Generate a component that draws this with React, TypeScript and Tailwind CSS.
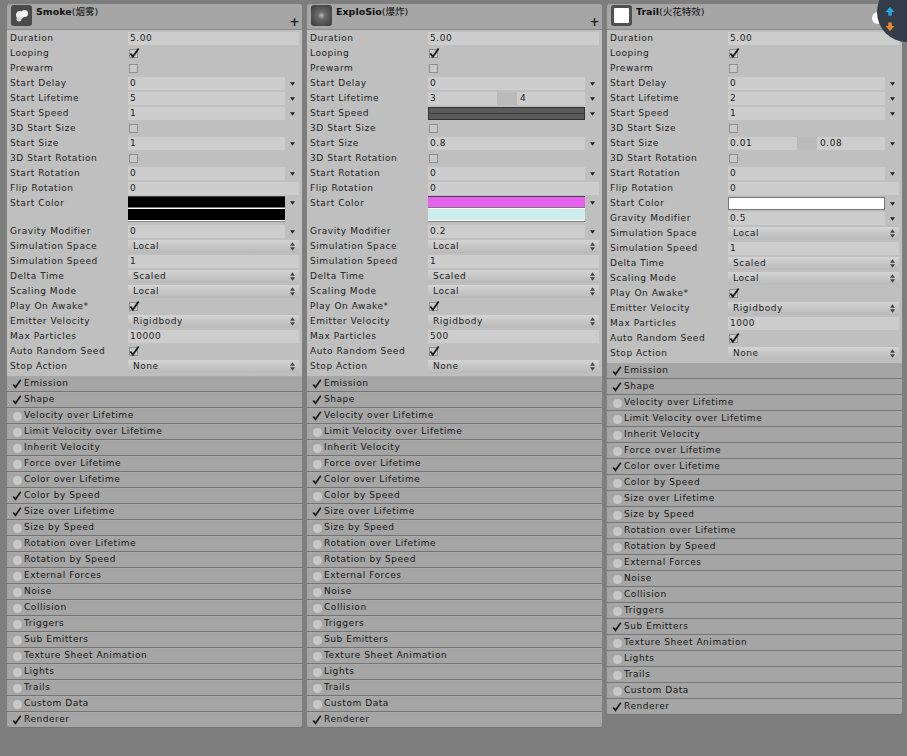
import type { ReactNode } from 'react';

type Row =
  | { kind: 'text' | 'drop' | 'enum'; label: string; value: string }
  | { kind: 'check'; label: string; on: boolean }
  | { kind: 'range'; label: string; a: string; b: string }
  | { kind: 'curve'; label: string }
  | { kind: 'color'; label: string; top: string; bottom: string }
  | { kind: 'white'; label: string };

const moduleNames = [
  'Emission',
  'Shape',
  'Velocity over Lifetime',
  'Limit Velocity over Lifetime',
  'Inherit Velocity',
  'Force over Lifetime',
  'Color over Lifetime',
  'Color by Speed',
  'Size over Lifetime',
  'Size by Speed',
  'Rotation over Lifetime',
  'Rotation by Speed',
  'External Forces',
  'Noise',
  'Collision',
  'Triggers',
  'Sub Emitters',
  'Texture Sheet Animation',
  'Lights',
  'Trails',
  'Custom Data',
  'Renderer',
];

const text = (label: string, value: string): Row => ({ kind: 'text', label, value });
const drop = (label: string, value: string): Row => ({ kind: 'drop', label, value });
const pick = (label: string, value: string): Row => ({ kind: 'enum', label, value });
const check = (label: string, on = false): Row => ({ kind: 'check', label, on });

const tail = (maxParticles: string): Row[] => [
  pick('Simulation Space', 'Local'),
  text('Simulation Speed', '1'),
  pick('Delta Time', 'Scaled'),
  pick('Scaling Mode', 'Local'),
  check('Play On Awake*', true),
  pick('Emitter Velocity', 'Rigidbody'),
  text('Max Particles', maxParticles),
  check('Auto Random Seed', true),
  pick('Stop Action', 'None'),
];

const systems: { name: string; note: string; thumb: 'smoke' | 'glow' | 'white'; rows: Row[]; enabled: string[] }[] = [
  {
    name: 'Smoke',
    note: '(烟雾)',
    thumb: 'smoke',
    rows: [
      text('Duration', '5.00'),
      check('Looping', true),
      check('Prewarm'),
      drop('Start Delay', '0'),
      drop('Start Lifetime', '5'),
      drop('Start Speed', '1'),
      check('3D Start Size'),
      drop('Start Size', '1'),
      check('3D Start Rotation'),
      drop('Start Rotation', '0'),
      text('Flip Rotation', '0'),
      { kind: 'color', label: 'Start Color', top: 'bg-black', bottom: 'bg-black' },
      drop('Gravity Modifier', '0'),
      ...tail('10000'),
    ],
    enabled: ['Emission', 'Shape', 'Color by Speed', 'Size over Lifetime', 'Renderer'],
  },
  {
    name: 'ExploSio',
    note: '(爆炸)',
    thumb: 'glow',
    rows: [
      text('Duration', '5.00'),
      check('Looping', true),
      check('Prewarm'),
      drop('Start Delay', '0'),
      { kind: 'range', label: 'Start Lifetime', a: '3', b: '4' },
      { kind: 'curve', label: 'Start Speed' },
      check('3D Start Size'),
      drop('Start Size', '0.8'),
      check('3D Start Rotation'),
      drop('Start Rotation', '0'),
      text('Flip Rotation', '0'),
      { kind: 'color', label: 'Start Color', top: 'bg-[#e660ee]', bottom: 'bg-[#cdeeec]' },
      drop('Gravity Modifier', '0.2'),
      ...tail('500'),
    ],
    enabled: ['Emission', 'Shape', 'Velocity over Lifetime', 'Color over Lifetime', 'Size over Lifetime', 'Renderer'],
  },
  {
    name: 'Trail',
    note: '(火花特效)',
    thumb: 'white',
    rows: [
      text('Duration', '5.00'),
      check('Looping', true),
      check('Prewarm'),
      drop('Start Delay', '0'),
      drop('Start Lifetime', '2'),
      drop('Start Speed', '1'),
      check('3D Start Size'),
      { kind: 'range', label: 'Start Size', a: '0.01', b: '0.08' },
      check('3D Start Rotation'),
      drop('Start Rotation', '0'),
      text('Flip Rotation', '0'),
      { kind: 'white', label: 'Start Color' },
      drop('Gravity Modifier', '0.5'),
      ...tail('1000'),
    ],
    enabled: ['Emission', 'Shape', 'Color over Lifetime', 'Sub Emitters', 'Renderer'],
  },
];

function Tick({ className }: { className: string }) {
  return (
    <svg viewBox="0 0 12 12" className={className}>
      <path d="M1.5 6.5 L4.2 10 L10.5 1" fill="none" stroke="#1c1c1c" strokeWidth="2" />
    </svg>
  );
}

function DownArrow() {
  return (
    <svg viewBox="0 0 6 4" className="h-[4px] w-[5px]">
      <path d="M0 0 H6 L3 4 Z" fill="#222" />
    </svg>
  );
}

function UpDownArrow() {
  return (
    <svg viewBox="0 0 6 10" className="h-[9px] w-[5px]">
      <path d="M3 0 L6 4 H0 Z M0 6 H6 L3 10 Z" fill="#444" />
    </svg>
  );
}

function Arrow({ children }: { children?: ReactNode }) {
  return <div className="flex w-[14px] shrink-0 items-center justify-center">{children ?? <DownArrow />}</div>;
}

function Value({ row }: { row: Row }) {
  const field = 'flex h-[13px] items-center bg-[#cdcdcd] pl-[2px]';
  switch (row.kind) {
    case 'text':
      return <div className={`${field} w-[171px]`}>{row.value}</div>;
    case 'drop':
      return (
        <div className="flex">
          <div className={`${field} w-[157px]`}>{row.value}</div>
          <Arrow />
        </div>
      );
    case 'enum':
      return (
        <div className="flex h-[13px] w-[171px] items-center justify-between bg-gradient-to-b from-[#d4d4d4] to-[#b9b9b9] pl-[5px] pr-[4px]">
          {row.value}
          <UpDownArrow />
        </div>
      );
    case 'check':
      return (
        <div className="relative ml-[1px] h-[9px] w-[9px] border border-[#8f8f8f] bg-[#c9c9c9]">
          {row.on && <Tick className="absolute -left-[1px] -top-[3px] h-[12px] w-[11px]" />}
        </div>
      );
    case 'range':
      return (
        <div className="flex">
          <div className={`${field} w-[69px]`}>{row.a}</div>
          <div className="h-[13px] w-[20px] bg-[#bababa]" />
          <div className={`${field} w-[68px] pl-[3px]`}>{row.b}</div>
          <Arrow />
        </div>
      );
    case 'curve':
      return (
        <div className="flex">
          <div className="flex h-[13px] w-[157px] flex-col justify-center border border-[#333] bg-[#5a5a5a]">
            <div className="h-px bg-[#3c3c3c]" />
          </div>
          <Arrow />
        </div>
      );
    case 'color':
      return (
        <div className="flex items-start">
          <div className="flex h-[26px] w-[157px] flex-col">
            <div className={`h-[11px] border-t border-[#444] ${row.top}`} />
            <div className="h-[2px] border-b border-b-white bg-[#777]" />
            <div className={`h-[11px] ${row.bottom}`} />
            <div className="h-[2px] border-b border-b-[#888] bg-white" />
          </div>
          <div className="flex h-[13px] w-[14px] shrink-0 items-center justify-center">
            <DownArrow />
          </div>
        </div>
      );
    case 'white':
      return (
        <div className="flex">
          <div className="h-[13px] w-[157px] border border-[#777] bg-white" />
          <Arrow />
        </div>
      );
  }
}

function Thumb({ type }: { type: 'smoke' | 'glow' | 'white' }) {
  if (type === 'white') {
    return (
      <div className="flex h-[21px] w-[21px] items-center justify-center rounded-[3px] bg-[#505050]">
        <div className="h-[15px] w-[15px] rounded-[1px] bg-white" />
      </div>
    );
  }
  if (type === 'glow') {
    return <div className="h-[21px] w-[21px] rounded-[3px] bg-[radial-gradient(circle,#b8b8b8_0%,#6a6a6a_25%,#454545_80%)]" />;
  }
  return (
    <div className="h-[21px] w-[21px] rounded-[3px] bg-[#4a4a4a]">
      <svg viewBox="0 0 21 21" className="h-full w-full">
        <circle cx="9" cy="10" r="4" fill="#eeeeee" />
        <circle cx="13.5" cy="8.5" r="3.5" fill="#f6f6f6" />
        <circle cx="8" cy="14" r="2.5" fill="#d8d8d8" />
      </svg>
    </div>
  );
}

function Panel({ system }: { system: (typeof systems)[number] }) {
  return (
    <div className="w-[295px] shrink-0">
      <div className="relative flex h-[26px] rounded-t-[3px] border-b border-[#8a8a8a] bg-[#a6a6a6] pl-[4px] pt-px">
        <Thumb type={system.thumb} />
        <div className="ml-[4px] pt-px text-[9.5px] leading-[12px] font-bold tracking-[0px] text-[#111]">
          {system.name}
          <span className="font-normal">{system.note}</span>
        </div>
        <div className="absolute bottom-[1px] right-[2px] text-[12px] leading-[12px] font-bold text-[#222]">+</div>
      </div>
      <div className="bg-[#bfbfbf] pt-px pb-[2px]">
        {system.rows.map((row) => (
          <div key={row.label} className={`flex pl-[3px] ${row.kind === 'color' ? 'h-[28px]' : 'h-[15px]'}`}>
            <div className="w-[118px] shrink-0 leading-[15px]">{row.label}</div>
            <div className={`flex h-[15px] ${row.kind === 'color' ? 'items-start' : 'items-center'}`}>
              <Value row={row} />
            </div>
          </div>
        ))}
      </div>
      <div>
        {moduleNames.map((name) => (
          <div
            key={name}
            className="flex h-[16px] items-center border-y border-t-[#a9a9a9] border-b-[#747474] bg-[#a5a5a5] pl-[4px] last:rounded-b-[3px]"
          >
            <div className="flex w-[12px] justify-center">
              {system.enabled.includes(name) ? (
                <Tick className="h-[10px] w-[10px]" />
              ) : (
                <div className="h-[9px] w-[9px] rounded-full bg-[#c8c8c8]" />
              )}
            </div>
            <div className="ml-[1px] text-[#151515]">{name}</div>
          </div>
        ))}
      </div>
    </div>
  );
}

export default function App() {
  return (
    <div className="relative h-[756px] w-[907px] overflow-hidden bg-[#7e7e7e] font-['DejaVu_Sans','Noto_Sans_CJK_SC',sans-serif] text-[9px] tracking-[0.55px] text-[#222]">
      <div className="flex items-start gap-[5px] pl-[7px] pt-[4px]">
        {systems.map((system) => (
          <Panel key={system.name} system={system} />
        ))}
      </div>
      {/* toggle peeking out from under the scene gizmo */}
      <div className="absolute left-[872px] top-[12px] h-[12px] w-[14px] rounded-full bg-white" />
      <div className="absolute left-[877px] top-[-18px] h-[60px] w-[60px] rounded-full bg-[#343c47]">
        <svg viewBox="0 0 16 30" className="absolute left-[6px] top-[22px] h-[30px] w-[14px]">
          <path d="M8 1 L13 7 H10 V11 H6 V7 H3 Z" fill="#29a8e0" />
          <path d="M6 19 H10 V23 H13 L8 29 L3 23 H6 Z" fill="#e68a2e" />
        </svg>
      </div>
    </div>
  );
}
